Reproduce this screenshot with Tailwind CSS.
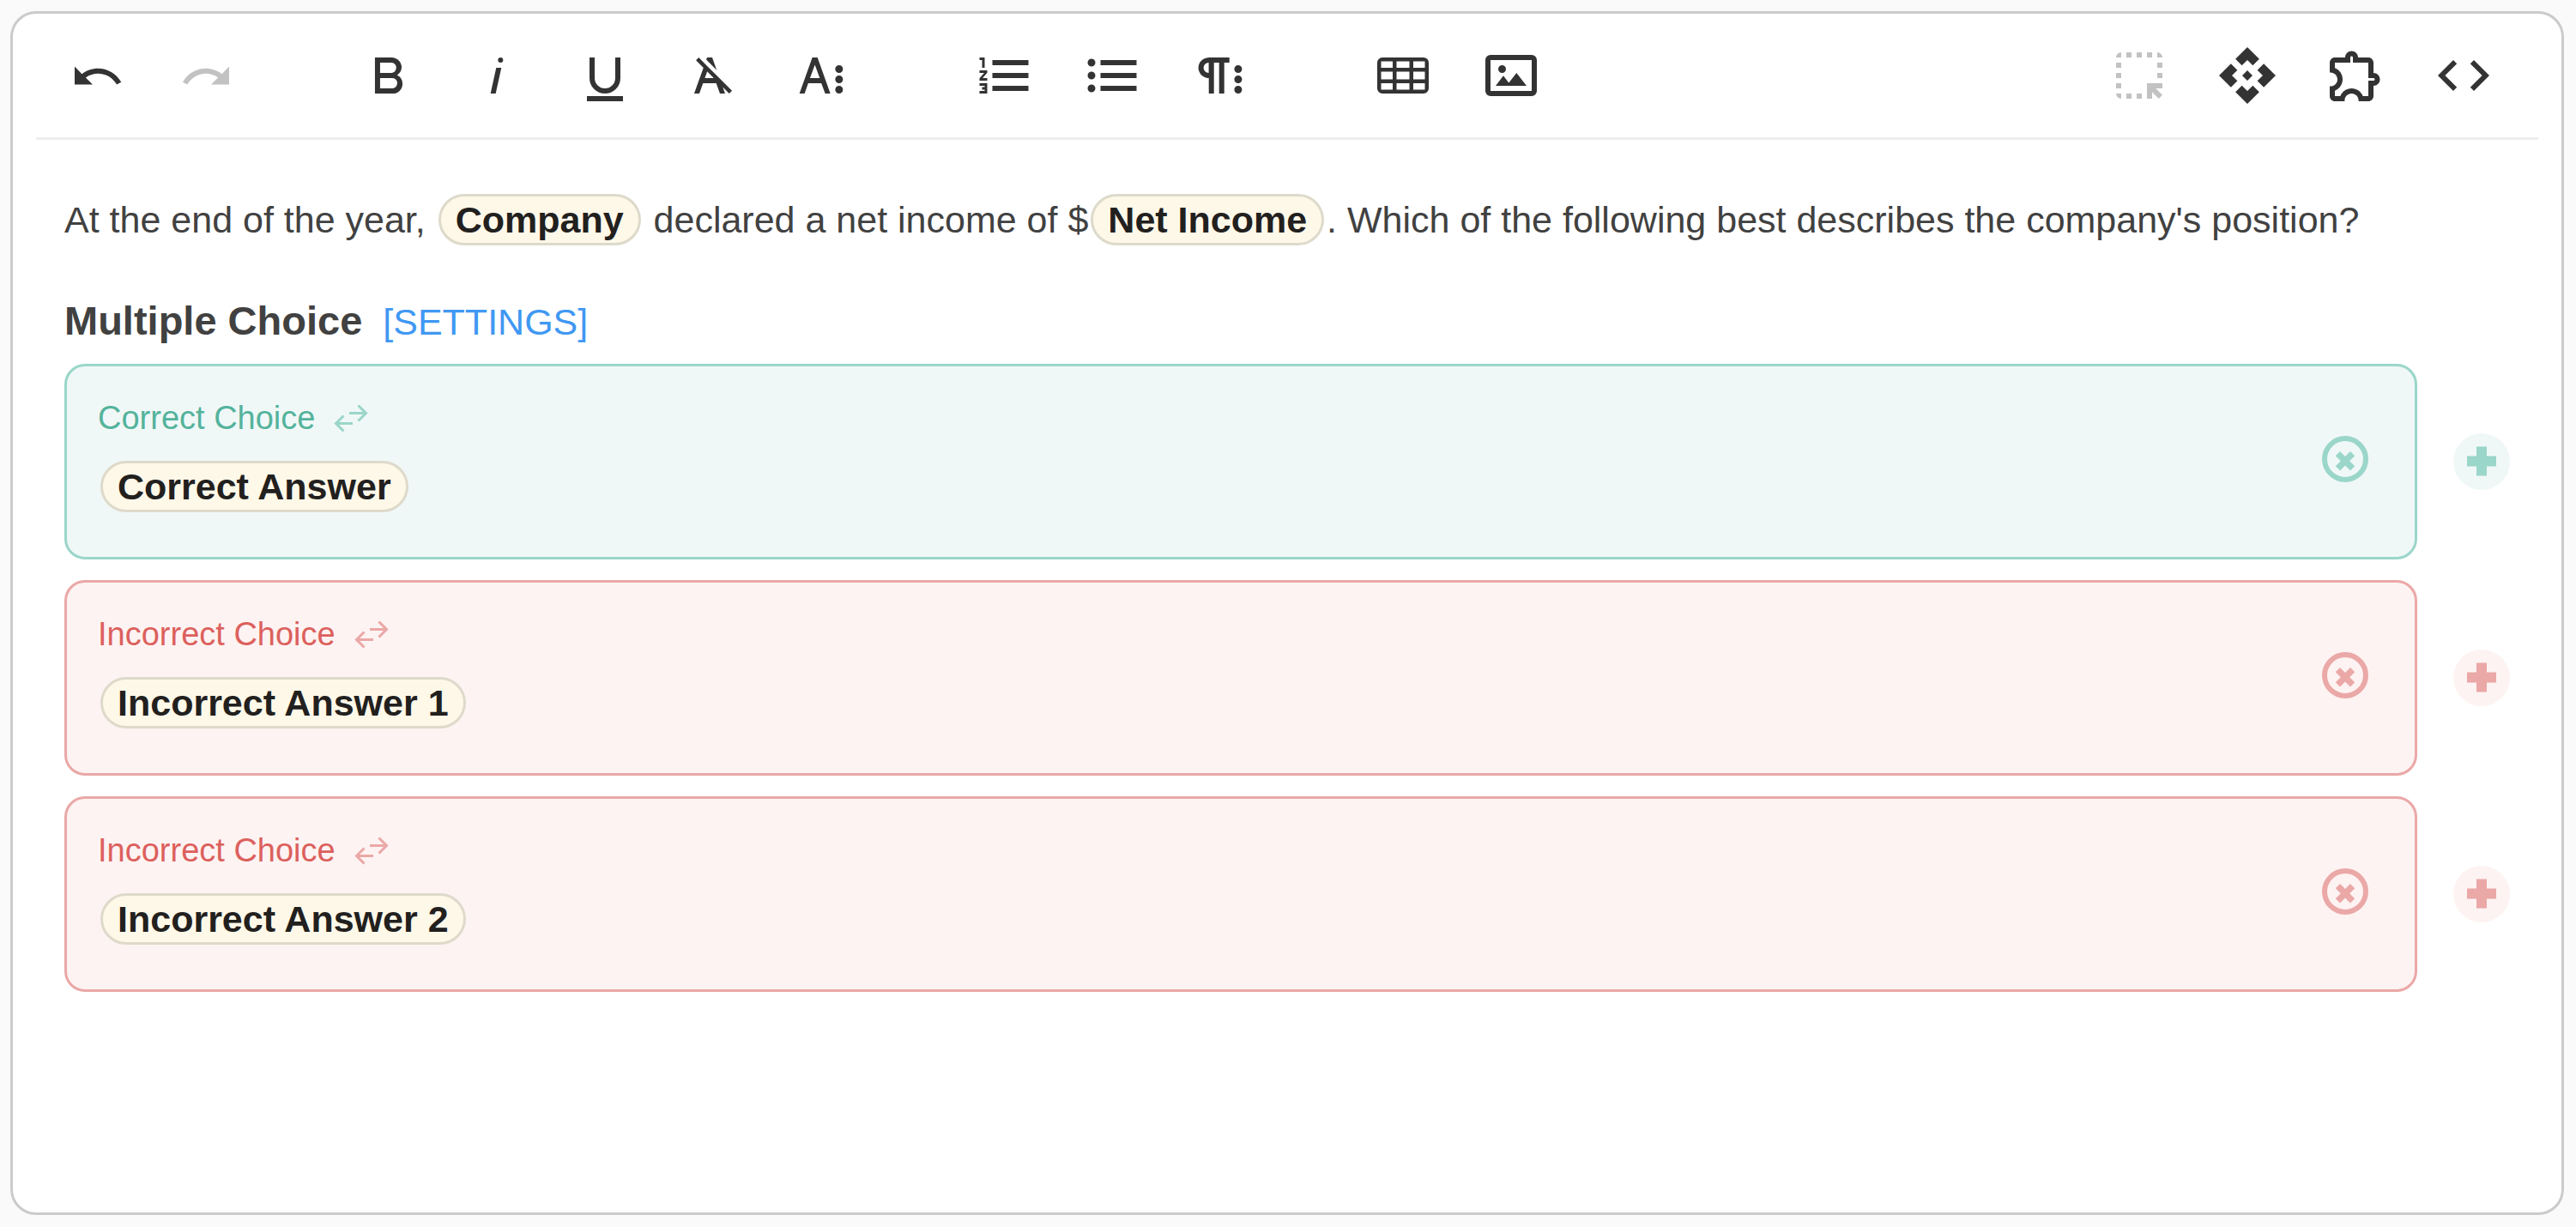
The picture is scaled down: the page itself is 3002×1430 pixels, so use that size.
<!DOCTYPE html>
<html lang="en">
<head>
<meta charset="utf-8">
<meta name="viewport" content="width=device-width, initial-scale=1">
<title>Question editor</title>
<script src="https://cdn.jsdelivr.net/npm/@tailwindcss/browser@4"></script>
</head>
<body class="flex min-h-screen flex-col bg-[#fafafa] pt-[13px] pr-[14px] pb-[14px] pl-3 font-['Liberation_Sans',Arial,sans-serif]">
<svg class="hidden" aria-hidden="true">
  <symbol id="swap" viewBox="0 0 40 33"><path fill="none" stroke="currentColor" stroke-width="3" d="M22 22.5H2M11.5 13.5l-9 9 9 9M18 10.5h20M28.500 1.500l9 9-9 9"/></symbol>
  <symbol id="remove" viewBox="0 0 54 54"><circle cx="27" cy="27" r="24" fill="none" stroke="currentColor" stroke-width="6"/><path stroke="currentColor" stroke-width="7.400" d="M18.400 20.700l17.200 17.200M35.600 20.700L18.400 37.900"/></symbol>
  <symbol id="plus" viewBox="0 0 66 66"><path fill="currentColor" d="M27 15.500h12v11h11v12H39v11H27v-11H16v-12h11z"/></symbol>
</svg>
<main class="flex grow flex-col rounded-[30px] border-3 border-[#cbcbcb] bg-white">
  <div role="toolbar" aria-label="Formatting" class="mx-[27px] flex h-[147px] items-center justify-between border-b-3 border-[#eee] pr-[30px] pl-[15px] text-[#333]">
    <div class="flex gap-[99px]">
      <div class="flex gap-3">
        <button aria-label="Undo" class="flex h-[114px] w-[114px] items-center justify-center"><svg class="size-[72px]" viewBox="0 0 24 24" fill="currentColor"><path d="M10.4 9.4c-1.7.3-3.2.9-4.600 2L3 8.500v7h7l-2.700-2.700c3.700-2.600 8.800-1.800 11.500 1.900.2.3.4.5.5.8l1.800-.9c-2.200-3.800-6.400-5.900-10.700-5.200z"/></svg></button>
        <button aria-label="Redo" disabled class="flex h-[114px] w-[114px] items-center justify-center text-[#c2c2c2]"><svg class="size-[72px]" viewBox="0 0 24 24" fill="currentColor"><path d="M13.600 9.400c1.700.3 3.200.9 4.600 2L21 8.500v7h-7l2.700-2.700C13 10.100 7.900 11 5.300 14.700c-.2.3-.4.5-.5.8L3 14.600c2.100-3.800 6.300-5.900 10.600-5.200z"/></svg></button>
      </div>
      <div class="flex gap-3">
        <button aria-label="Bold" class="flex h-[114px] w-[114px] items-center justify-center"><svg class="size-[72px]" viewBox="0 0 24 24" fill="currentColor"><path d="M15.250,11.800h0A3.680,3.680,0,0,0,17,9a3.930,3.930,0,0,0-3.860-4H6.650V19h7a3.740,3.740,0,0,0,3.700-3.780V15.100A3.640,3.640,0,0,0,15.250,11.800ZM8.650,7h4.200a2.090,2.090,0,0,1,2,1.300,2.090,2.090,0,0,1-1.370,2.610,2.230,2.230,0,0,1-.63.09H8.650Zm4.600,10H8.650V13h4.600a2.090,2.090,0,0,1,2,1.300,2.090,2.090,0,0,1-1.370,2.610A2.230,2.230,0,0,1,13.250,17Z"/></svg></button>
        <button aria-label="Italic" class="flex h-[114px] w-[114px] items-center justify-center"><svg class="size-[72px]" viewBox="0 0 24 24" fill="currentColor"><path d="M11.760,9h2l-2.200,10h-2Zm1.680-4a1,1,0,1,0,1,1,1,1,0,0,0-1-1Z"/></svg></button>
        <button aria-label="Underline" class="flex h-[114px] w-[114px] items-center justify-center"><svg class="size-[72px]" viewBox="0 0 24 24" fill="currentColor"><path d="M19,20v2H5V20ZM16,5h2v8a6,6,0,0,1-12,0V5H8v8a4,4,0,0,0,8,0Z"/></svg></button>
        <button aria-label="Clear formatting" class="flex h-[114px] w-[114px] items-center justify-center"><svg class="size-[72px]" viewBox="0 0 24 24" fill="currentColor"><path d="M11.480,10.090l-1.200-1.210L8.800,7.410,6.430,5,5.370,6.100,8.250,9,4.660,19h2l1.430-4h5.140l1.430,4h2l-.89-2.510L18.270,19l1.070-1.060L14.590,13.200ZM8.800,13l.92-2.560L12.270,13Zm.56-7.150L9.660,5h2l1.750,4.900Z"/></svg></button>
        <button aria-label="More text options" class="flex h-[114px] w-[114px] items-center justify-center"><svg class="size-[72px]" viewBox="0 0 24 24" fill="currentColor"><path d="M13.550,19h2l-5-14h-2l-5,14h2l1.400-4h5.100Zm-5.900-6,1.900-5.200,1.900,5.200Zm12.800,4.500a1.500,1.500,0,1,1-1.500-1.500A1.500,1.500,0,0,1,20.450,17.500Zm0-4a1.500,1.500,0,1,1-1.500-1.500A1.500,1.500,0,0,1,20.450,13.500Zm0-4A1.500,1.500,0,1,1,18.950,8,1.500,1.500,0,0,1,20.450,9.500Z"/></svg></button>
      </div>
      <div class="flex gap-3">
        <button aria-label="Ordered list" class="flex h-[114px] w-[114px] items-center justify-center"><svg class="size-[72px]" viewBox="0 0 24 24" fill="currentColor"><path d="M2.500,16h2v.5h-1v1h1V18h-2v1h3V15h-3Zm1-7h1V5h-2V6h1Zm-1,2H4.300L2.500,13.100V14h3V13H3.700l1.800-2.100V10h-3Zm5-5V8h14V6Zm0,12h14V16H7.500Zm0-5h14V11H7.500Z"/></svg></button>
        <button aria-label="Unordered list" class="flex h-[114px] w-[114px] items-center justify-center"><svg class="size-[72px]" viewBox="0 0 24 24" fill="currentColor"><path d="M4,10.500A1.500,1.500,0,1,0,5.500,12,1.500,1.500,0,0,0,4,10.500Zm0-5A1.500,1.500,0,1,0,5.500,7,1.500,1.500,0,0,0,4,5.500Zm0,10A1.500,1.500,0,1,0,5.500,17,1.500,1.500,0,0,0,4,15.500ZM7.500,6V8h14V6Zm0,12h14V16H7.500Zm0-5h14V11H7.500Z"/></svg></button>
        <button aria-label="More paragraph options" class="flex h-[114px] w-[114px] items-center justify-center"><svg class="size-[72px]" viewBox="0 0 24 24" fill="currentColor"><path d="M7.680,5a4.110,4.110,0,0,0-4.070,3.180,4,4,0,0,0,3.110,4.730,3.770,3.770,0,0,0,.85.090v6h2V7h2V19h2V7h2V5ZM5.530,9a2,2,0,0,1,2-2v4A2,2,0,0,1,5.530,9Zm14.940,8.500a1.500,1.500,0,1,1-1.500-1.500A1.500,1.500,0,0,1,20.470,17.500Zm0-4a1.500,1.500,0,1,1-1.500-1.500A1.500,1.500,0,0,1,20.470,13.500Zm0-4a1.500,1.500,0,1,1-1.500-1.500A1.500,1.500,0,0,1,20.470,9.500Z"/></svg></button>
      </div>
      <div class="flex gap-3">
        <button aria-label="Insert table" class="flex h-[114px] w-[114px] items-center justify-center"><svg class="size-[72px]" viewBox="0 0 24 24" fill="currentColor" fill-rule="evenodd"><path d="M4,5H20a2,2,0,0,1,2,2V17a2,2,0,0,1-2,2H4a2,2,0,0,1-2-2V7A2,2,0,0,1,4,5ZM3.500,6.500V9H8V6.500Zm6,0V9h5V6.500Zm6.500,0V9h4.500V6.500ZM3.500,10.500v3H8v-3Zm6,0v3h5v-3Zm6.500,0v3h4.500v-3ZM3.500,15v2.500H8V15Zm6,0v2.500h5V15ZM16,15v2.500h4.500V15Z"/></svg></button>
        <button aria-label="Insert image" class="flex h-[114px] w-[114px] items-center justify-center"><svg class="size-[72px]" viewBox="0 0 24 24" fill="currentColor" fill-rule="evenodd"><path d="M14.100,11l3.900,5H6l3-3.900,2.100,2.700ZM8.500,11A1.500,1.500,0,1,0,7,9.500,1.500,1.500,0,0,0,8.500,11ZM22,6V18a2,2,0,0,1-2,2H4a2,2,0,0,1-2-2V6A2,2,0,0,1,4,4H20A2,2,0,0,1,22,6ZM20,6H4V18H20Z"/></svg></button>
      </div>
    </div>
    <div class="flex gap-3">
      <button aria-label="Select region" disabled class="flex h-[114px] w-[114px] items-center justify-center text-[#c2c2c2]"><svg class="size-[72px]" viewBox="0 0 24 24" fill="currentColor"><path d="M5 3v2H3a2 2 0 0 1 2-2zm2 0h2v2H7zm4 0h2v2h-2zm4 0h2v2h-2zm4 0a2 2 0 0 1 2 2h-2zM3 7h2v2H3zm16 0h2v2h-2zM3 11h2v2H3zm16 0h2v2h-2zM3 15h2v2H3zm0 4h2v2a2 2 0 0 1-2-2zm4 0h2v2H7zm4 0h2v2h-2zm4-4h6v2h-2.600l2.600 2.600-1.400 1.400-2.600-2.600V21h-2z"/></svg></button>
      <button aria-label="Variables" class="flex h-[114px] w-[114px] items-center justify-center"><svg class="size-[72px]" viewBox="0 0 24 24" fill="currentColor"><path d="M14 12l-2 2-2-2 2-2 2 2zm-2-6l2.120 2.120 2.500-2.500L12 1 7.380 5.620l2.500 2.500L12 6zm-6 6l2.120-2.120-2.500-2.500L1 12l4.620 4.620 2.500-2.500L6 12zm12 0l-2.120 2.120 2.500 2.500L23 12l-4.620-4.620-2.500 2.500L18 12zm-6 6l-2.120-2.120-2.500 2.500L12 23l4.620-4.620-2.500-2.500L12 18z"/></svg></button>
      <button aria-label="Extensions" class="flex h-[114px] w-[114px] items-center justify-center"><svg class="size-[72px]" viewBox="0 0 24 24" fill="currentColor"><path d="M10.500 4.500c.28 0 .5.22.5.5v2h6v6h2c.28 0 .5.22.5.5s-.22.5-.5.5h-2v6h-2.120c-.68-1.750-2.390-3-4.380-3s-3.700 1.250-4.380 3H4v-2.120c1.750-.68 3-2.390 3-4.380 0-1.990-1.240-3.700-2.990-4.380L4 7h6V5c0-.28.22-.5.5-.5m0-2C9.120 2.500 8 3.620 8 5H4c-1.100 0-1.990.9-1.990 2v3.800h.29c1.490 0 2.700 1.210 2.700 2.700s-1.210 2.700-2.700 2.700H2V20c0 1.100.9 2 2 2h3.800v-.3c0-1.490 1.210-2.700 2.700-2.700s2.700 1.210 2.700 2.700v.3H17c1.100 0 2-.9 2-2v-4c1.380 0 2.500-1.120 2.500-2.500S20.380 11 19 11V7c0-1.100-.9-2-2-2h-4c0-1.380-1.120-2.500-2.500-2.500z"/></svg></button>
      <button aria-label="Code view" class="flex h-[114px] w-[114px] items-center justify-center"><svg class="size-[72px]" viewBox="0 0 24 24" fill="currentColor"><path d="M9.400 16.600L4.800 12l4.600-4.600L8 6l-6 6 6 6 1.400-1.400zm5.200 0l4.600-4.600-4.600-4.600L16 6l6 6-6 6-1.400-1.400z"/></svg></button>
    </div>
  </div>

  <div class="px-[60px] pt-[63px] pb-10 text-[43px] text-[#414141]">
    <p class="leading-[60px]">At the end of the year, <span class="mx-[3px] inline-block rounded-full border-3 border-[#dedacb] bg-[#fef8e8] px-[17px] leading-[54px] font-bold text-[#22201e]">Company</span> declared a net income of $<span class="mx-[3px] inline-block rounded-full border-3 border-[#dedacb] bg-[#fef8e8] px-[17px] leading-[54px] font-bold text-[#22201e]">Net Income</span>. Which of the following best describes the company's position?</p>

    <div class="mt-[58px] mb-[19px] flex items-baseline gap-6 leading-[60px]">
      <h2 class="text-[47px] font-bold">Multiple Choice</h2>
      <a href="#settings" class="text-[#4098f2]">[SETTINGS]</a>
    </div>

    <ul class="flex flex-col gap-6">
      <li class="flex items-center gap-[42px] text-[#9ad6c9]">
        <div class="flex grow items-center justify-between rounded-3xl border-3 border-[#9ad6c9] bg-[#f0f8f7] pr-[54px] pb-[6px] pl-9">
          <div class="pt-9 pb-[46px]">
            <div class="flex items-center gap-[22px] text-[38px] leading-[48px]"><span class="text-[#54b39c]">Correct Choice</span><button aria-label="Make incorrect"><svg class="h-[33px] w-10"><use href="#swap"/></svg></button></div>
            <div class="mt-[26px] ml-[3px] w-fit rounded-full border-3 border-[#dedacb] bg-[#fef8e8] px-[17px] leading-[54px] font-bold text-[#22201e]">Correct Answer</div>
          </div>
          <button aria-label="Remove choice"><svg class="size-[54px]"><use href="#remove"/></svg></button>
        </div>
        <button aria-label="Add correct choice" class="rounded-full bg-[#f0f8f7]"><svg class="size-[66px]"><use href="#plus"/></svg></button>
      </li>
      <li class="flex items-center gap-[42px] text-[#eaa8a7]">
        <div class="flex grow items-center justify-between rounded-3xl border-3 border-[#eaa8a7] bg-[#fdf3f2] pr-[54px] pb-[6px] pl-9">
          <div class="pt-9 pb-[46px]">
            <div class="flex items-center gap-[22px] text-[38px] leading-[48px]"><span class="text-[#dc605d]">Incorrect Choice</span><button aria-label="Make correct"><svg class="h-[33px] w-10"><use href="#swap"/></svg></button></div>
            <div class="mt-[26px] ml-[3px] w-fit rounded-full border-3 border-[#dedacb] bg-[#fef8e8] px-[17px] leading-[54px] font-bold text-[#22201e]">Incorrect Answer 1</div>
          </div>
          <button aria-label="Remove choice"><svg class="size-[54px]"><use href="#remove"/></svg></button>
        </div>
        <button aria-label="Add incorrect choice" class="rounded-full bg-[#fdf3f2]"><svg class="size-[66px]"><use href="#plus"/></svg></button>
      </li>
      <li class="flex items-center gap-[42px] text-[#eaa8a7]">
        <div class="flex grow items-center justify-between rounded-3xl border-3 border-[#eaa8a7] bg-[#fdf3f2] pr-[54px] pb-[6px] pl-9">
          <div class="pt-9 pb-[46px]">
            <div class="flex items-center gap-[22px] text-[38px] leading-[48px]"><span class="text-[#dc605d]">Incorrect Choice</span><button aria-label="Make correct"><svg class="h-[33px] w-10"><use href="#swap"/></svg></button></div>
            <div class="mt-[26px] ml-[3px] w-fit rounded-full border-3 border-[#dedacb] bg-[#fef8e8] px-[17px] leading-[54px] font-bold text-[#22201e]">Incorrect Answer 2</div>
          </div>
          <button aria-label="Remove choice"><svg class="size-[54px]"><use href="#remove"/></svg></button>
        </div>
        <button aria-label="Add incorrect choice" class="rounded-full bg-[#fdf3f2]"><svg class="size-[66px]"><use href="#plus"/></svg></button>
      </li>
    </ul>
  </div>
</main>
</body>
</html>
